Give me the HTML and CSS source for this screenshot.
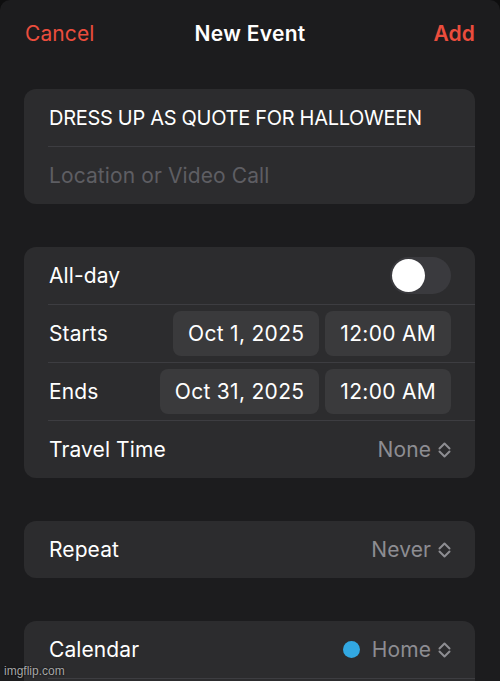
FILE: index.html
```html
<!DOCTYPE html>
<html>
<head>
  <title>New Event</title>
  <link rel="stylesheet" href="styles.css">
</head>
<body>

<div class="sheet">
  <div class="nav">
    <span class="nav-btn">Cancel</span>
    <span class="nav-title">New Event</span>
    <span class="nav-btn nav-add">Add</span>
  </div>

  <div class="card">
    <div class="row"><span class="label title">DRESS UP AS QUOTE FOR HALLOWEEN</span></div>
    <div class="row"><span class="label placeholder">Location or Video Call</span></div>
  </div>

  <div class="card">
    <div class="row">
      <span class="label">All-day</span>
      <span class="toggle"><span class="knob"></span></span>
    </div>
    <div class="row">
      <span class="label">Starts</span>
      <span class="pills">
        <span class="pill">Oct 1, 2025</span>
        <span class="pill">12:00 AM</span>
      </span>
    </div>
    <div class="row">
      <span class="label">Ends</span>
      <span class="pills">
        <span class="pill">Oct 31, 2025</span>
        <span class="pill">12:00 AM</span>
      </span>
    </div>
    <div class="row">
      <span class="label">Travel Time</span>
      <span class="value">None
        <svg class="chev" width="13" height="16" viewBox="0 0 13 16"><path d="M1.5 6.5 L6.5 1.5 L11.5 6.5 M1.5 9.5 L6.5 14.5 L11.5 9.5" /></svg>
      </span>
    </div>
  </div>

  <div class="card">
    <div class="row">
      <span class="label">Repeat</span>
      <span class="value">Never
        <svg class="chev" width="13" height="16" viewBox="0 0 13 16"><path d="M1.5 6.5 L6.5 1.5 L11.5 6.5 M1.5 9.5 L6.5 14.5 L11.5 9.5" /></svg>
      </span>
    </div>
  </div>

  <div class="card">
    <div class="row">
      <span class="label">Calendar</span>
      <span class="value"><span class="dot"></span>Home
        <svg class="chev" width="13" height="16" viewBox="0 0 13 16"><path d="M1.5 6.5 L6.5 1.5 L11.5 6.5 M1.5 9.5 L6.5 14.5 L11.5 9.5" /></svg>
      </span>
    </div>
    <div class="row"></div>
  </div>
</div>

<div class="watermark">imgflip.com</div>

</body>
</html>
```

FILE: styles.css
```css
html, body {
  margin: 0;
  height: 681px;
  overflow: hidden;
  background: #0e0e0f;
}

body {
  font-family: Inter, "Noto Sans", sans-serif;
  color: #fff;
  position: relative;
}

.sheet {
  background: #1c1c1e;
  border-radius: 10px 10px 0 0;
  padding: 0 25px 0 24px;
  height: 681px;
  overflow: hidden;
}

.nav {
  height: 66px;
  display: flex;
  align-items: center;
  justify-content: space-between;
  padding: 0 0 0 1px;
  margin-bottom: 23px;
}

.nav-btn {
  color: #eb4d3d;
  font-size: 21px;
  letter-spacing: 0.1px;
  width: 100px;
}

.nav-add {
  font-weight: 600;
  text-align: right;
}

.nav-title {
  font-size: 21px;
  font-weight: 600;
  letter-spacing: 0.3px;
}

.card {
  background: #2c2c2e;
  border-radius: 12px;
  padding-left: 24px;
  margin-bottom: 43px;
}

.row {
  height: 57px;
  display: flex;
  align-items: center;
  justify-content: space-between;
  padding-right: 24px;
  padding-left: 1px;
}

.row + .row {
  border-top: 1px solid #3d3d41;
}

.label {
  font-size: 21px;
  letter-spacing: 0.1px;
}

.title {
  font-size: 20px;
  letter-spacing: -0.3px;
}

.placeholder {
  color: #5e5e63;
}

.value {
  display: flex;
  align-items: center;
  font-size: 21px;
  letter-spacing: 0.1px;
  color: #8d8d92;
}

.chev {
  margin-left: 7px;
  fill: none;
  stroke: #8d8d92;
  stroke-width: 2;
  stroke-linecap: round;
  stroke-linejoin: round;
}

.dot {
  width: 17px;
  height: 17px;
  border-radius: 50%;
  background: #32a8e2;
  margin-right: 12px;
}

.toggle {
  width: 61px;
  height: 37px;
  border-radius: 19px;
  background: #3a3a3e;
  display: flex;
  align-items: center;
  padding: 0 2px;
  box-sizing: border-box;
}

.knob {
  width: 33px;
  height: 33px;
  border-radius: 50%;
  background: #fff;
}

.pills {
  display: flex;
  gap: 6px;
}

.pill {
  background: #3a3a3c;
  border-radius: 8px;
  height: 45px;
  padding: 0 15px;
  display: flex;
  align-items: center;
  font-size: 21px;
  letter-spacing: 0.3px;
}

.watermark {
  position: absolute;
  left: 4px;
  top: 664px;
  font-family: "Liberation Sans", sans-serif;
  font-size: 12px;
  color: #a8a8a8;
  text-shadow: 0 0 2px #000;
}
```
